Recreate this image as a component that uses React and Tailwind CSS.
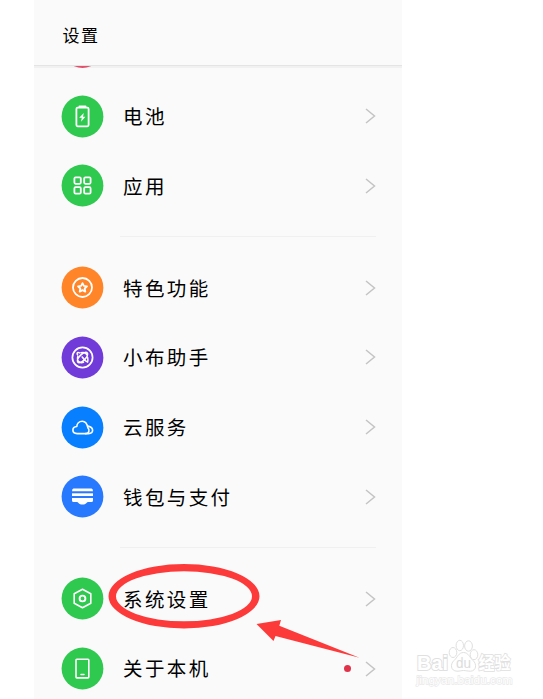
import React from 'react';

const line = { fill: 'none', stroke: 'white', strokeWidth: 1.6, strokeLinejoin: 'round', strokeLinecap: 'round' };

const icons = {
  battery: (
    <g>
      <rect x="14.900" y="12.200" width="12.200" height="18.600" rx="1.200" {...line} strokeWidth="1.800" />
      <path d="M18 10.900h6" {...line} strokeWidth="2" />
      <path d="M22.300 17.600l-4.600 4.700h2.600l-.8 3.900 4.400-4.900h-2.400z" fill="white" />
    </g>
  ),
  apps: (
    <g {...line} strokeWidth="1.800">
      <rect x="12.900" y="12.900" width="6.400" height="6.400" rx="1.200" />
      <rect x="22.700" y="12.900" width="6.400" height="6.400" rx="1.200" />
      <rect x="12.900" y="22.700" width="6.400" height="6.400" rx="1.200" />
      <rect x="22.700" y="22.700" width="6.400" height="6.400" rx="1.200" />
    </g>
  ),
  star: (
    <g {...line} strokeWidth="1.800">
      <circle cx="21" cy="21" r="9.500" />
      <path d="M21 16.600l1.400 2.800 3.100.4-2.300 2.200.6 3.100-2.800-1.500-2.800 1.500.6-3.100-2.300-2.200 3.100-.4z" />
    </g>
  ),
  assistant: (
    <g {...line}>
      <circle cx="21" cy="21" r="10.100" strokeWidth="1.700" />
      <g strokeWidth="1.500">
        <ellipse cx="21" cy="21" rx="3" ry="6.600" transform="rotate(45 21 21)" />
        <path d="M16.300 20c-.9 2.500.1 5 2 5.800 1.300.5 2.600.4 3.700 0" />
        <path d="M19.500 16.200c2.600-.6 5 .2 6 2.200" />
        <path d="M18.200 16.400c-1.300-.6-2.200-.5-2.500.1-.2.500 0 1.200.4 2M20.700 20.500c1.500 2.300 3.200 4.200 5.400 5.100M26.100 20.800c.4 1.800.5 3.400 0 4.800" />
      </g>
    </g>
  ),
  cloud: (
    <g {...line}>
      <path d="M15.700 27.100h8.600c3 0 4.400-3.700 2.100-5.700-.7-4-2.500-6.700-5.600-6.700-3.200 0-5.400 2.400-5.500 5.300-2.500.2-3.900 1.700-3.900 3.600 0 2 1.800 3.500 4.300 3.500z" />
      <path d="M26.400 19.600c2.900.5 4.700 2 4.700 4.200 0 1.900-1.600 3.300-4.100 3.300h-3" />
    </g>
  ),
  wallet: (
    <g fill="white">
      <path d="M12 13h18q1.500 0 1.500 2.800H10.500Q10.500 13 12 13z" />
      <path d="M10.500 17.800h21v2.700h-21z" />
      <path d="M10.500 22.600h21V25q0 1.500-1.500 1.500h-3.500c-1.200 0-1.700 2.600-5.500 2.600s-4.300-2.600-5.500-2.600H12q-1.500 0-1.500-1.500z" />
    </g>
  ),
  system: (
    <g {...line}>
      <path d="M21 11.800l8.300 4.500v9.400L21 30.200l-8.300-4.500v-9.400z" />
      <circle cx="21" cy="21" r="2.900" strokeWidth="1.900" />
    </g>
  ),
  phone: (
    <g {...line}>
      <rect x="14.500" y="11.800" width="12.800" height="18.600" rx=".8" />
      <path d="M19.500 27h3" strokeWidth="1.500" />
    </g>
  ),
};

const groups = [
  [
    { label: '电池', icon: 'battery', color: 'text-[#2fc950]' },
    { label: '应用', icon: 'apps', color: 'text-[#2fc950]' },
  ],
  [
    { label: '特色功能', icon: 'star', color: 'text-[#ff8528]' },
    { label: '小布助手', icon: 'assistant', color: 'text-[#713bda]' },
    { label: '云服务', icon: 'cloud', color: 'text-[#087fff]' },
    { label: '钱包与支付', icon: 'wallet', color: 'text-[#2979ff]' },
  ],
  [
    { label: '系统设置', icon: 'system', color: 'text-[#2fc950]' },
    { label: '关于本机', icon: 'phone', color: 'text-[#2fc950]', dot: true },
  ],
];

function Row({ item }) {
  return (
    <div className="flex h-[69.67px] items-center pr-[26px] pl-[27px]">
      <svg viewBox="-0.5 -0.5 43 43" className={`size-[43px] shrink-0 ${item.color}`}>
        <circle cx="21" cy="21" r="20.900" fill="currentColor" />
        {icons[item.icon]}
      </svg>
      <span className="ml-[19px] flex-1 pb-px text-[19.500px] leading-none tracking-[2.400px] whitespace-nowrap text-black">{item.label}</span>
      {item.dot && <span className="mr-[14px] size-[7px] rounded-full bg-[#e0334a]" />}
      <svg viewBox="0 0 11 16" className="h-[16px] w-[11px]">
        <path d="M1 1l8.500 7L1 15" fill="none" stroke="#c4c4c4" strokeWidth="1.500" />
      </svg>
    </div>
  );
}

function Watermark() {
  return (
    <svg viewBox="0 0 110 54" className="absolute top-[636px] left-[410px] h-[54px] w-[110px]" fontFamily="'Liberation Sans','Noto Sans CJK SC',sans-serif">
      <g fill="#fff" stroke="#e0e0e0" strokeWidth="1">
        <text x="7" y="34" fontSize="21" fontWeight="bold" strokeWidth="2" paintOrder="stroke" textLength="31" lengthAdjust="spacingAndGlyphs">Bai</text>
        <ellipse cx="43" cy="16.500" rx="3.800" ry="5" />
        <ellipse cx="49.800" cy="9.500" rx="3.700" ry="5.200" />
        <ellipse cx="58.500" cy="10" rx="3.900" ry="5.200" />
        <ellipse cx="64" cy="18.700" rx="3.800" ry="5" />
        <path d="M53.500 16.500c-5 0-6 5-9.500 8-4 3.500-3.500 10.500 3 10.700 3 0 4-.7 6.500-.7s4 .7 7 .7c6-.3 6.500-7.200 2.500-10.700-3.500-3-4.500-8-9.500-8z" />
        <text x="46" y="31.500" fontSize="14" fill="#dcdcdc" stroke="none" textLength="15" lengthAdjust="spacingAndGlyphs">du</text>
        <text x="68.500" y="33" fontSize="17" fontWeight="bold" strokeWidth="1.600" paintOrder="stroke" textLength="32" lengthAdjust="spacingAndGlyphs">经验</text>
      </g>
      <text x="6.500" y="47.800" fontSize="11.500" fill="#fff" stroke="#e9e9e9" strokeWidth="1.300" paintOrder="stroke" textLength="96" lengthAdjust="spacingAndGlyphs">jingyan.baidu.com</text>
    </svg>
  );
}

export default function App() {
  return (
    <div className="relative h-[699px] w-[543px] overflow-hidden bg-white font-['Noto_Sans_CJK_SC',sans-serif]">
      <main className="ml-[34px] h-full w-[368px] bg-[#fafafa]">
        <header className="flex h-[66px] items-center border-b border-[#e4e4e4] pt-[4px] pl-[28.500px]">
          <h1 className="text-[17px] leading-none tracking-[1.500px] text-black">设置</h1>
        </header>
        <div className="flex h-[2px] items-end overflow-hidden bg-[#f1f1f1] pl-[27px]">
          <svg viewBox="0 0 42 2" className="h-[2px] w-[42px] shrink-0">
            <circle cx="21.500" cy="-19" r="20.900" fill="#e2506a" />
          </svg>
        </div>
        <div className="pt-[13.300px]">
          {groups.map((group, i) => (
            <section key={i}>
              {i > 0 && <div className="mt-[15.500px] mr-[26px] mb-[15.900px] ml-[86px] h-px bg-[#f0f0f0]" />}
              {group.map((item) => <Row key={item.label} item={item} />)}
            </section>
          ))}
        </div>
      </main>
      <svg viewBox="0 0 260 110" className="absolute top-[560px] left-[104px] h-[110px] w-[260px]">
        <path fillRule="evenodd" d="M4.500 36.300a75.500 32.200 0 1 0 151 0a75.500 32.200 0 1 0-151 0zM12 36.300a68 25 0 1 0 136 0a68 25 0 1 0-136 0z" fill="#fd3a3a" />
        <path d="M152.500 64l24.500-4-1.700 5.800L255.500 97.800l-84-21.800-2 5z" fill="#fd3a3a" />
      </svg>
      <Watermark />
    </div>
  );
}
